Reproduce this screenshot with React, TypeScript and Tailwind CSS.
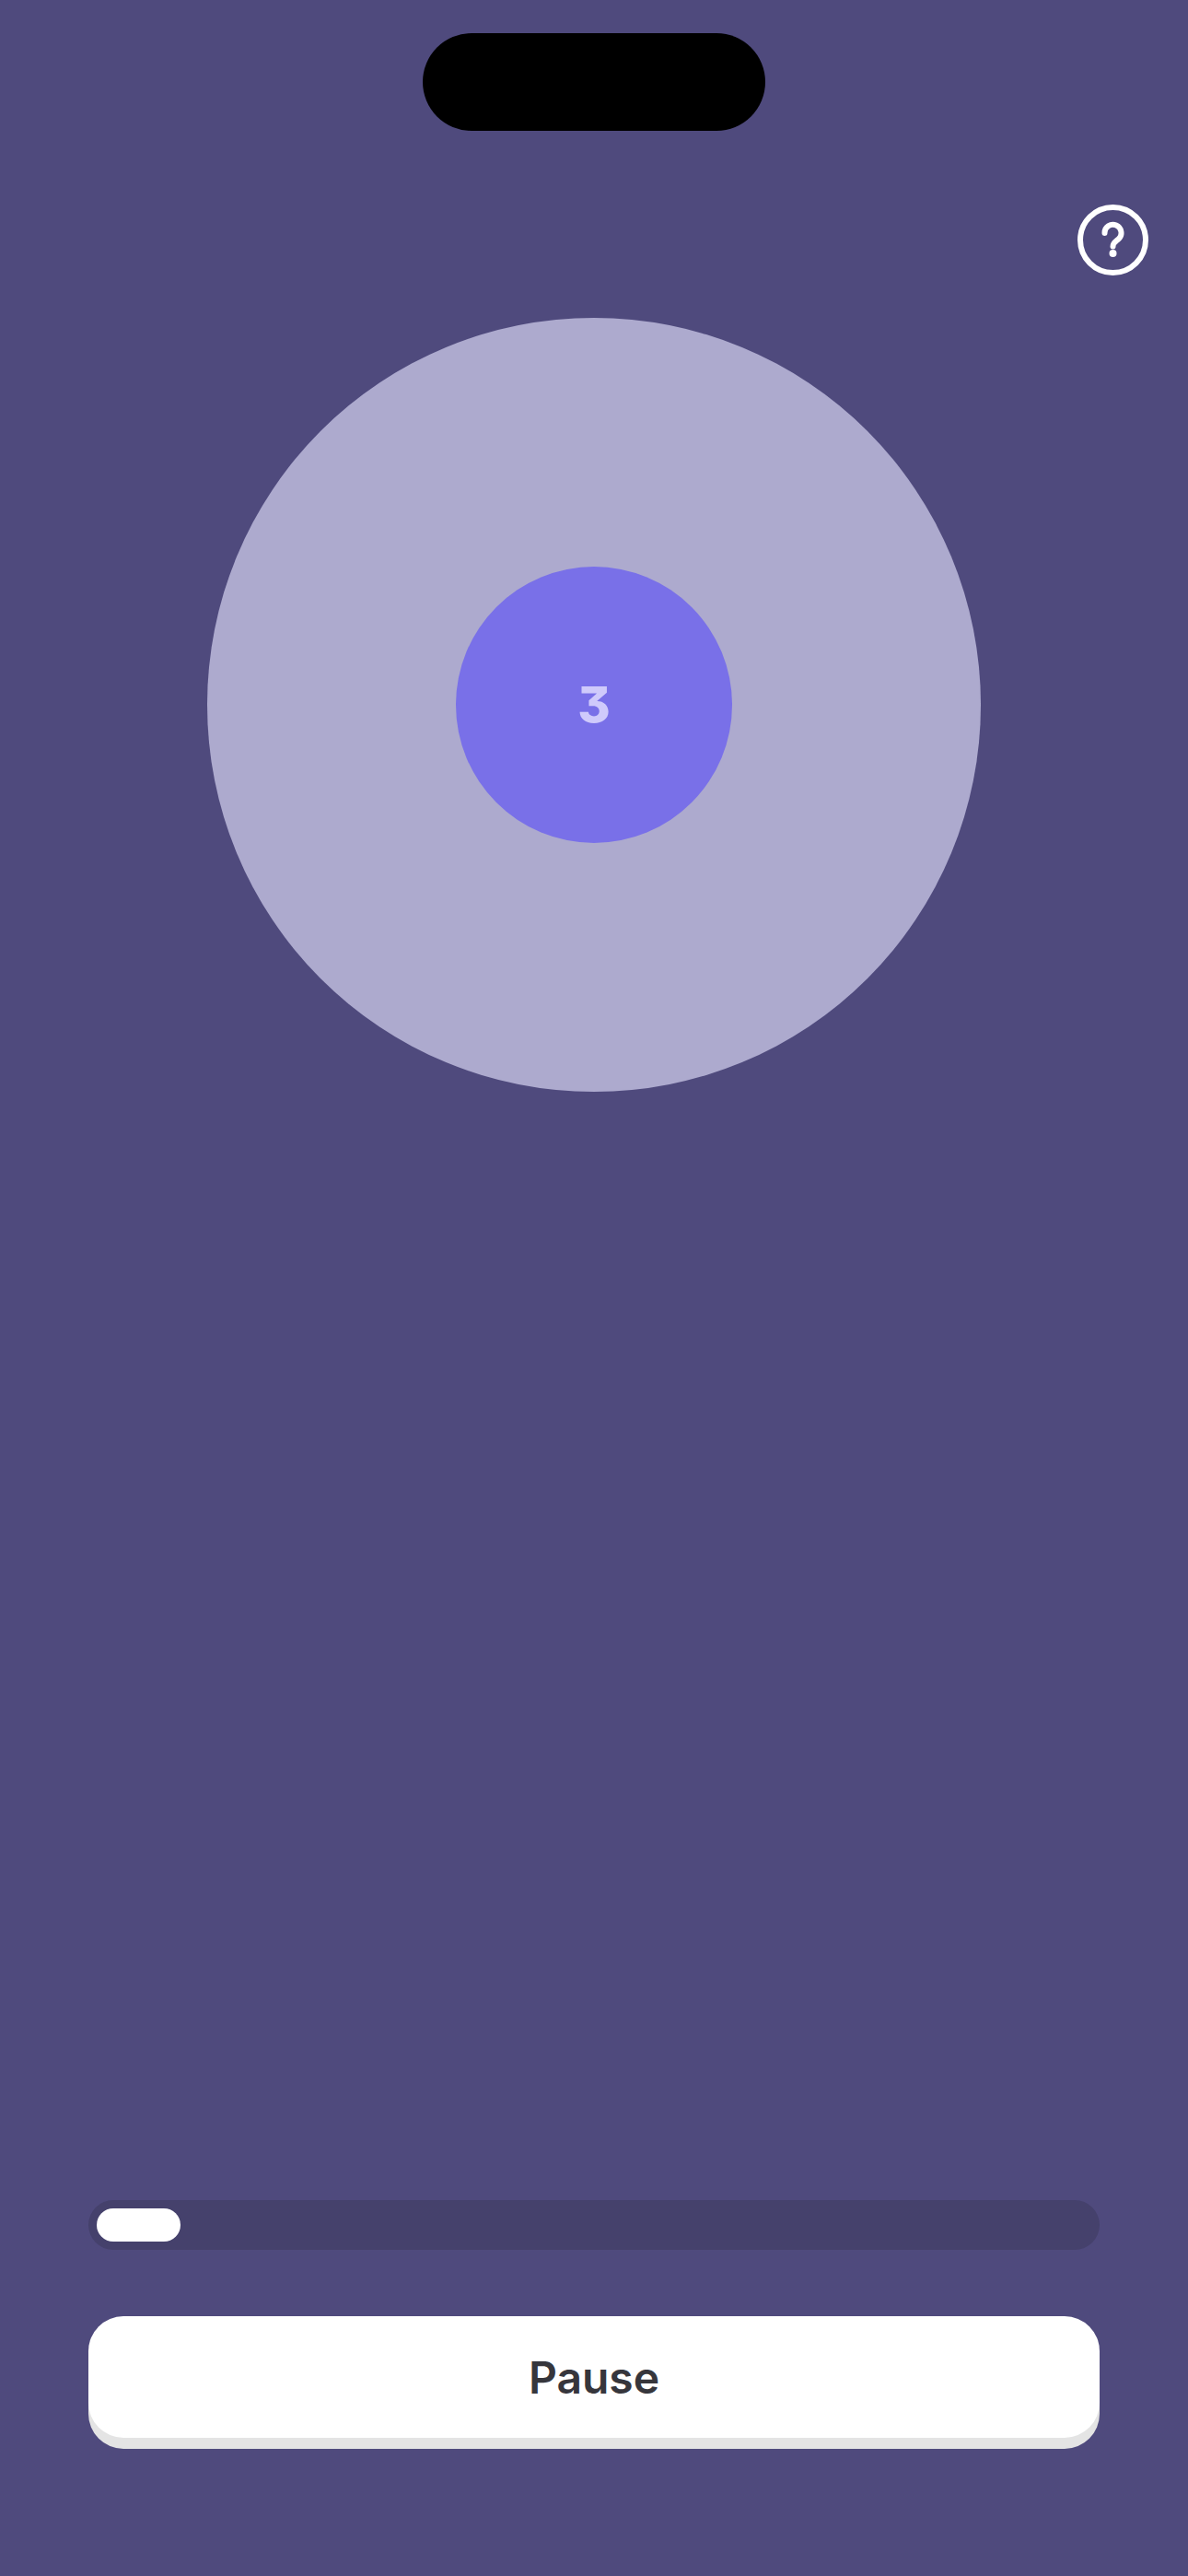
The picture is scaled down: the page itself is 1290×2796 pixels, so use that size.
function HelpIcon() {
    return (
        <svg width="77" height="77" viewBox="0 0 77 77" fill="none" stroke="#ffffff" strokeLinecap="round">
            <circle cx="38.5" cy="38.5" r="35.5" strokeWidth="6" />
            <path d="M29.5 31a9 9 0 1 1 15 6.5c-3 2.6-6 4-6 8" strokeWidth="6" strokeLinejoin="round" />
            <circle cx="38.5" cy="53" r="4" fill="#ffffff" stroke="none" />
        </svg>
    );
}

function App() {
    return (
        <div className="flex h-[2796px] w-full flex-col items-center bg-[#4f4a7d] px-[96px] pb-[150px] font-['Inter',sans-serif]">
            {/* notch */}
            <div className="mt-[36px] h-[106px] w-[372px] rounded-full bg-black" />

            <button className="mt-[80px] -mr-[53px] self-end">
                <HelpIcon />
            </button>

            <div className="mt-[46px] flex h-[840px] w-[840px] items-center justify-center rounded-full bg-[#adaace]">
                <div className="flex h-[300px] w-[300px] items-center justify-center rounded-full bg-[#7970e8]">
                    <span className="text-[54px] leading-none font-extrabold text-[#cfcafb] [font-feature-settings:'cv09']">3</span>
                </div>
            </div>

            <div className="mt-auto h-[54px] w-full rounded-full bg-[#45416c] p-[9px]">
                <div className="h-[36px] w-[91px] rounded-full bg-white" />
            </div>

            <button className="mt-[72px] h-[132px] w-full rounded-[38px] bg-white pt-[2px] text-[48px] font-semibold text-[#36363c] shadow-[0_12px_0_#e4e4e4]">
                Pause
            </button>
        </div>
    );
}

export default App;
